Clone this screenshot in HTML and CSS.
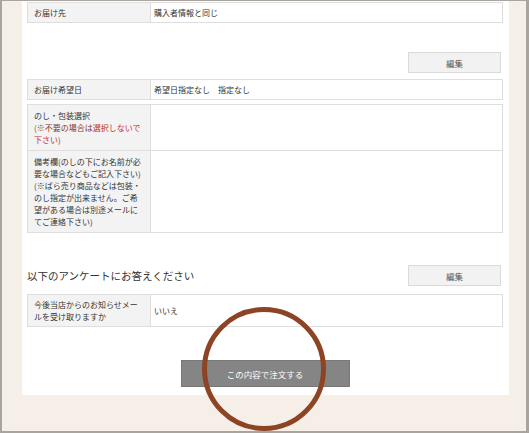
FILE: index.html
```html
<!DOCTYPE html>
<html lang="ja">
<head>
    <meta charset="UTF-8">
    <meta name="viewport" content="width=device-width, initial-scale=1.0">
    <title>ご注文内容の確認</title>
    <link rel="stylesheet" href="styles.css">
</head>
<body>
    <div class="frame">
        <div class="panel">
            <!-- お届け先 -->
            <table class="info-table">
                <tr>
                    <th>お届け先</th>
                    <td>購入者情報と同じ</td>
                </tr>
            </table>

            <div class="edit-row edit-row-delivery">
                <button class="edit-btn">編集</button>
            </div>

            <!-- 配送・のし -->
            <table class="info-table">
                <tr>
                    <th>お届け希望日</th>
                    <td>希望日指定なし　指定なし</td>
                </tr>
            </table>
            <table class="info-table gap-top">
                <tr>
                    <th>のし・包装選択<br><span class="note">(※不要の場合は<span class="note-red">選択しないで下さい</span>)</span></th>
                    <td></td>
                </tr>
                <tr>
                    <th>備考欄(のしの下にお名前が必要な場合などもご記入下さい)(※ばら売り商品などは包装・のし指定が出来ません。ご希望がある場合は別途メールにてご連絡下さい)</th>
                    <td></td>
                </tr>
            </table>

            <!-- アンケート -->
            <div class="section-head">
                <h2>以下のアンケートにお答えください</h2>
                <button class="edit-btn">編集</button>
            </div>
            <table class="info-table">
                <tr>
                    <th>今後当店からのお知らせメールを受け取りますか</th>
                    <td>いいえ</td>
                </tr>
            </table>

            <div class="submit-row">
                <button class="submit-btn">この内容で注文する</button>
            </div>
        </div>

        <div class="highlight"></div>
    </div>
</body>
</html>
```

FILE: styles.css
```css
* {
    margin: 0;
    padding: 0;
    box-sizing: border-box;
}
body {
    font-family: "Noto Sans CJK JP", "DejaVu Sans", sans-serif;
    color: #333;
    background: #fff;
}
.frame {
    position: relative;
    width: 529px;
    height: 433px;
    background: #f6efe7;
    border: 2px solid #a9a49d;
    border-right-width: 3px;
    border-top-width: 1px;
    padding: 0 17px 0 20px;
    overflow: hidden;
}
.panel {
    background: #fff;
    height: 394px;
    padding: 1px 6px 0 5px;
}
.info-table {
    width: 100%;
    border-collapse: collapse;
    table-layout: fixed;
    font-size: 8px;
    line-height: 12px;
}
.info-table th, .info-table td {
    border: 1px solid #dedede;
    padding: 3.5px 6px;
    text-align: left;
    vertical-align: middle;
    font-weight: normal;
}
.info-table th {
    width: 123px;
    background: #f3f3f3;
    padding-right: 7px;
}
.info-table td {
    padding-left: 3px;
}
.gap-top {
    margin-top: 4px;
}
.gap-top th, .gap-top td {
    padding-top: 4.5px;
    padding-bottom: 4.5px;
}
.note {
    color: #86392c;
}
.note-red {
    color: #c4302b;
}
.edit-row {
    display: flex;
    justify-content: flex-end;
    padding-right: 2px;
}
.edit-row-delivery {
    margin: 29px 0 6px;
}
.edit-btn {
    width: 93px;
    height: 21px;
    background: #f2f2f2;
    border: 1px solid #dadada;
    font-family: inherit;
    font-size: 8.5px;
    color: #555;
}
.section-head {
    display: flex;
    justify-content: space-between;
    align-items: center;
    padding-right: 2px;
    margin: 32px 0 8px;
}
.section-head h2 {
    font-size: 10.5px;
    font-weight: normal;
    color: #333;
}
.submit-row {
    display: flex;
    justify-content: center;
    margin-top: 33px;
}
.submit-btn {
    width: 169px;
    height: 27px;
    background: #858585;
    border: 1px solid #777;
    color: #fff;
    font-family: inherit;
    font-size: 8.5px;
}
.highlight {
    position: absolute;
    left: 200px;
    top: 306px;
    width: 124px;
    height: 124px;
    border: 5px solid #8d4425;
    border-radius: 50%;
}
```
